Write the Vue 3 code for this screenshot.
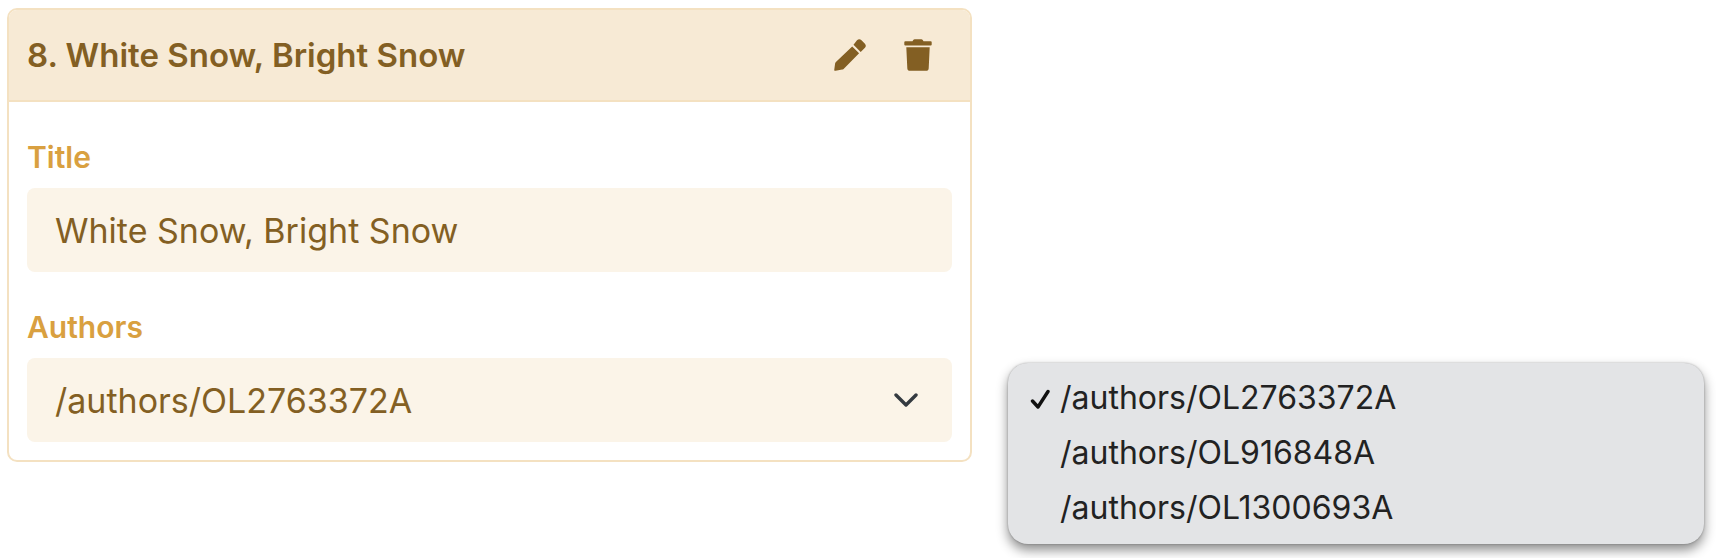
<script setup>
import { ref } from 'vue'

const title = ref('White Snow, Bright Snow')
const authors = ['/authors/OL2763372A', '/authors/OL916848A', '/authors/OL1300693A']
const author = ref(authors[0])
</script>

<template>
  <main class="page">
    <article class="card">
      <header class="card-header">
        <h2>8. White Snow, Bright Snow</h2>
        <div class="actions">
          <button type="button" aria-label="Edit">
            <svg width="32" height="32" viewBox="0 0 32 32" fill="currentColor" aria-hidden="true">
              <path d="M23 1.300a3.200 3.200 0 0 1 4.500 0l3.200 3.200a3.200 3.200 0 0 1 0 4.500l-4 4-7.200-7.200zM18.200 7.400l6.900 6.900L9.600 29.900a2.500 2.500 0 0 1-1.400.7L1.600 31.700A1.100 1.100 0 0 1 .3 30.400L1.100 24.500a3 3 0 0 1 .8-1.600z" />
            </svg>
          </button>
          <button type="button" aria-label="Delete">
            <svg width="28" height="32" viewBox="0 0 28 32" fill="currentColor" aria-hidden="true">
              <path d="M1.300 2.300H8.500l.6-1.100A2 2 0 0 1 10.800.3h6.400a2 2 0 0 1 1.700.9l.6 1.100h7.200A1 1 0 0 1 27.700 3.300v2.200A1 1 0 0 1 26.700 6.500H1.300A1 1 0 0 1 .3 5.500V3.300A1 1 0 0 1 1.300 2.300zM2.300 8.200h23.400l-1 21a2.800 2.800 0 0 1-2.800 2.600H6.100a2.800 2.800 0 0 1-2.800-2.600z" />
            </svg>
          </button>
        </div>
      </header>
      <form class="card-body" @submit.prevent>
        <div class="field">
          <label for="title">Title</label>
          <input id="title" v-model="title" class="control" type="text" />
        </div>
        <div class="field">
          <label for="author">Authors</label>
          <div class="select-wrap">
            <select id="author" v-model="author" class="control">
              <option v-for="a in authors" :key="a" :value="a">{{ a }}</option>
            </select>
            <svg class="chevron" width="24" height="14" viewBox="0 0 24 14" fill="none" aria-hidden="true">
              <path d="M2 2l10 10L22 2" stroke="#343a40" stroke-width="3.400" stroke-linecap="round" stroke-linejoin="round" />
            </svg>
          </div>
        </div>
      </form>
    </article>

    <div class="menu" role="listbox" aria-label="Authors">
      <button
        v-for="a in authors"
        :key="a"
        type="button"
        class="option"
        role="option"
        :aria-selected="a === author"
        @click="author = a"
      >
        <span class="mark">
          <svg v-if="a === author" width="20" height="20" viewBox="0 0 20 20" fill="none" aria-hidden="true">
            <path d="M2.500 12l5.500 6L18 2.500" stroke="#111" stroke-width="3.400" stroke-linecap="round" stroke-linejoin="round" />
          </svg>
        </span>
        <span>{{ a }}</span>
      </button>
    </div>
  </main>
</template>

<style>
body {
  background: #fff;
}
</style>

<style scoped>
.page {
  box-sizing: border-box;
  min-height: 100vh;
  display: grid;
  grid-template-columns: minmax(0, 965fr) minmax(0, 696fr);
  column-gap: 36px;
  padding: 8px 12px 14px 7px;
  font-family: Inter, 'Liberation Sans', sans-serif;
}

.card {
  align-self: start;
  border: 2px solid #f4e1c1;
  border-radius: 10px;
  overflow: hidden;
  color: #835f23;
}

.card-header {
  display: flex;
  align-items: center;
  justify-content: space-between;
  min-height: 90px;
  padding: 0 38px 0 18px;
  border-bottom: 2px solid #f4e1c1;
  background: #f7ead5;
}

h2 {
  margin: 0;
  font-size: 33px;
  line-height: 40px;
  font-weight: 600;
}

.actions {
  display: flex;
  gap: 38px;
}

button {
  padding: 0;
  border: 0;
  background: none;
  color: inherit;
  font: inherit;
  cursor: pointer;
}

.actions button {
  display: flex;
}

.card-body {
  display: grid;
  gap: 37px;
  padding: 37px 18px 18px;
}

.field {
  display: grid;
  gap: 13px;
}

label {
  font-size: 30px;
  line-height: 36px;
  font-weight: 600;
  color: #d9a040;
}

.control {
  box-sizing: border-box;
  display: block;
  width: 100%;
  height: 84px;
  margin: 0;
  padding: 0 28px;
  border: 0;
  border-radius: 8px;
  outline: 0;
  appearance: none;
  background: #fbf4e8;
  color: inherit;
  font-family: inherit;
  font-size: 34px;
  font-weight: 400;
}

.select-wrap {
  position: relative;
}

.chevron {
  position: absolute;
  top: 35px;
  right: 34px;
  pointer-events: none;
}

.menu {
  align-self: end;
  display: grid;
  padding: 7px 0 9px;
  border-radius: 20px;
  background: #e3e4e6;
  box-shadow: 0 0 2px rgba(0, 0, 0, 0.3), 0 6px 12px rgba(0, 0, 0, 0.45);
}

.option {
  display: flex;
  align-items: center;
  height: 55px;
  padding: 0 22px;
  color: #222;
  font-size: 32px;
  text-align: left;
}

.mark {
  display: flex;
  width: 30px;
  padding-top: 2px;
}
</style>
